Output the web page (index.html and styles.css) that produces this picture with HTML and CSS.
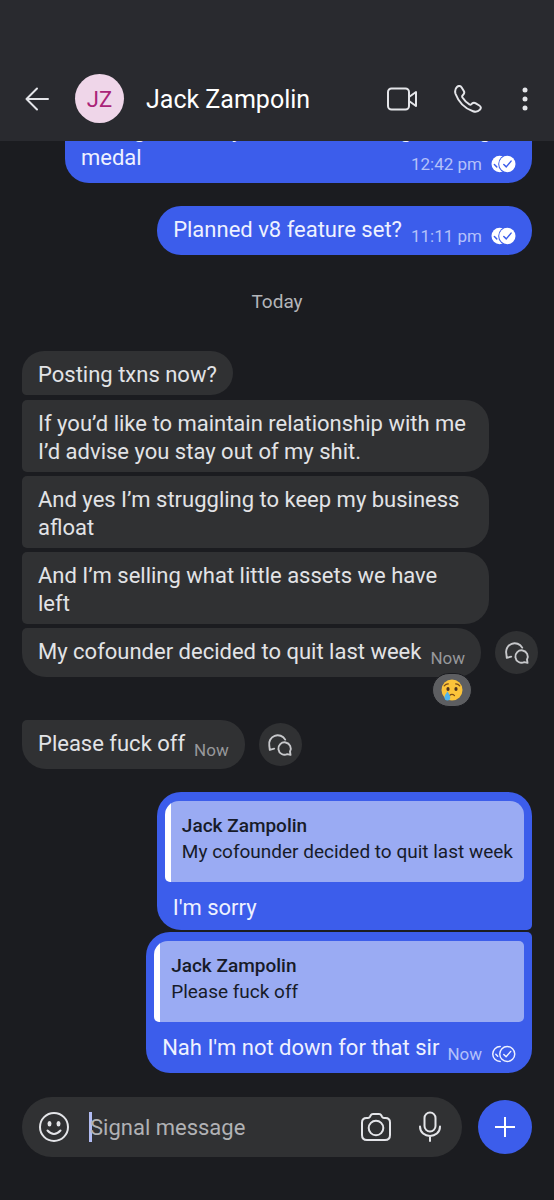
FILE: index.html
```html
<!DOCTYPE html>
<html lang="en">
<head>
<meta charset="utf-8">
<meta name="viewport" content="width=device-width, initial-scale=1">
<title>Jack Zampolin</title>
<link rel="stylesheet" href="styles.css">
</head>
<body>
<svg class="defs" aria-hidden="true">
  <symbol id="read" viewBox="0 0 26 18">
    <circle cx="9" cy="9" r="8.500" fill="#fff"/>
    <path d="M3.500 9.500l2.500 2.500" fill="none" stroke="#3c5deb" stroke-width="1.500" stroke-linecap="round"/>
    <circle cx="17" cy="9" r="9.500" fill="#3c5deb"/>
    <circle cx="17" cy="9" r="8.500" fill="#fff"/>
    <path d="M13.300 9.500l2.600 2.500 5-6" fill="none" stroke="#3c5deb" stroke-width="1.500" stroke-linecap="round" stroke-linejoin="round"/>
  </symbol>
  <symbol id="delivered" viewBox="0 0 26 18">
    <g fill="none" stroke="#eef1ff" stroke-width="1.500" stroke-linecap="round" stroke-linejoin="round">
      <path d="M9.600 1.200A7.800 7.800 0 1 0 9.600 16.800M5 9.200l2 2.200"/>
      <circle cx="16.900" cy="9" r="7.800"/>
      <path d="M13.300 9.500l2.400 2.400 4.800-5.600"/>
    </g>
  </symbol>
  <symbol id="chats" viewBox="0 0 26 24">
    <g fill="none" stroke="currentColor" stroke-width="1.900" stroke-linecap="round" stroke-linejoin="round">
      <path d="M18.200 6.600A8.600 8.600 0 0 0 2.300 12.600L2.800 16.800L7.200 15.600"/>
      <path d="M23 18.500a6.200 6.200 0 1 0-2.700 2.600l3.200.8z"/>
    </g>
  </symbol>
</svg>
<div class="app">
  <header class="topbar">
    <button class="icon-btn back" aria-label="Back">
      <svg width="24" height="24" viewBox="0 0 24 24"><path d="M23 12H1.500M12 1.500L1.500 12L12 22.500"/></svg>
    </button>
    <div class="avatar">JZ</div>
    <h1 class="name">Jack Zampolin</h1>
    <div class="actions">
      <button class="icon-btn" aria-label="Video call">
        <svg width="32" height="24" viewBox="0 0 32 24"><rect x="2" y="1.500" width="21" height="21" rx="3.500"/><path d="M23 10l7-5v14l-7-5"/></svg>
      </button>
      <button class="icon-btn" aria-label="Voice call">
        <svg width="28" height="28" viewBox="0 0 28 28"><path d="M3.200 1.800C4.800.5 6.400.7 7.500 2.300L9.800 6C10.600 7.400 10.300 8.700 9.200 9.800L8.400 10.600C8 11.200 8.100 11.800 8.500 12.500C10.200 15.200 12.600 17.700 15.400 19.400C16.100 19.800 16.700 19.800 17.300 19.300L18 18.600C19.100 17.600 20.500 17.500 21.800 18.300L25.300 20.500C27 21.600 27.300 23.200 26 24.700C24.100 26.800 21.800 27.400 19 26.300C11.200 23.600 4.600 17 1.600 9C.6 6 1.100 3.700 3.200 1.800Z"/></svg>
      </button>
      <button class="icon-btn more" aria-label="More options">
        <svg class="dots" width="6" height="24" viewBox="0 0 6 24"><circle cx="3" cy="3" r="2.500"/><circle cx="3" cy="12" r="2.500"/><circle cx="3" cy="21" r="2.500"/></svg>
      </button>
    </div>
  </header>

  <main class="thread">
    <article class="bubble out wide">
      <p class="text">Taking home my another amazing training medal</p>
      <span class="meta corner">12:42 pm <svg class="status"><use href="#read"/></svg></span>
    </article>
    <article class="bubble out timed gap-l">
      <p class="text">Planned v8 feature set?</p>
      <span class="meta">11:11 pm <svg class="status"><use href="#read"/></svg></span>
    </article>
    <p class="day">Today</p>
    <article class="bubble in first"><p class="text">Posting txns now?</p></article>
    <article class="bubble in mid"><p class="text">If you’d like to maintain relationship with me I’d advise you stay out of my shit.</p></article>
    <article class="bubble in mid"><p class="text">And yes I’m struggling to keep my business afloat</p></article>
    <article class="bubble in mid"><p class="text">And I’m selling what little assets we have left</p></article>
    <div class="row">
      <article class="bubble in last timed">
        <p class="text">My cofounder decided to quit last week</p><span class="meta">Now</span>
        <button class="reaction" aria-label="Crying face reaction">
          <svg width="22" height="22" viewBox="0 0 22 22">
            <circle cx="11" cy="11" r="10.500" fill="#fcc43a"/>
            <path d="M3.200 6.800Q5 4.800 7.300 4.900M14.700 4.900Q17 4.800 18.800 6.800M8.500 16.700Q11 14.200 13.500 16.700" fill="none" stroke="#7a4a16" stroke-width="1.200" stroke-linecap="round"/>
            <ellipse cx="7" cy="10" rx="1.600" ry="2.100" fill="#4f3422"/><ellipse cx="15" cy="10" rx="1.600" ry="2.100" fill="#4f3422"/>
            <path d="M6.500 12.500Q3.300 16.500 3.500 18.500A2.900 2.900 0 0 0 9.300 18.500Q9.300 16.500 6.500 12.500Z" fill="#4fb5ee"/>
          </svg>
        </button>
      </article>
      <button class="thread-btn" aria-label="Open thread"><svg width="26" height="24"><use href="#chats"/></svg></button>
    </div>
    <div class="row after-reaction">
      <article class="bubble in last timed">
        <p class="text">Please fuck off</p><span class="meta">Now</span>
      </article>
      <button class="thread-btn" aria-label="Open thread"><svg width="26" height="24"><use href="#chats"/></svg></button>
    </div>
    <article class="bubble out quoted q-first gap-l">
      <blockquote class="quote"><strong class="author">Jack Zampolin</strong><p class="excerpt">My cofounder decided to quit last week</p></blockquote>
      <div class="line"><p class="text">I'm sorry</p></div>
    </article>
    <article class="bubble out quoted q-last">
      <blockquote class="quote"><strong class="author">Jack Zampolin</strong><p class="excerpt">Please fuck off</p></blockquote>
      <div class="line"><p class="text">Nah I'm not down for that sir</p><span class="meta">Now <svg class="status"><use href="#delivered"/></svg></span></div>
    </article>
  </main>

  <form class="composer">
    <div class="field">
      <button type="button" class="icon-btn" aria-label="Emoji">
        <svg width="32" height="32" viewBox="0 0 32 32"><circle cx="16" cy="16" r="14"/><path d="M9.500 19.500Q16 26.500 22.500 19.500"/><g class="solid"><ellipse cx="11.500" cy="12.800" rx="2" ry="2.700"/><ellipse cx="20.500" cy="12.800" rx="2" ry="2.700"/></g></svg>
      </button>
      <span class="caret"></span>
      <input class="input" type="text" placeholder="Signal message" aria-label="Signal message">
      <button type="button" class="icon-btn" aria-label="Camera">
        <svg width="32" height="30" viewBox="0 0 32 30"><path d="M2 10.500Q2 6 6.500 6H8Q9.300 6 10 4.700L10.600 3.500Q11.400 2 13 2H19Q20.600 2 21.400 3.500L22 4.700Q22.700 6 24 6H25.500Q30 6 30 10.500V23Q30 28 25 28H7Q2 28 2 23Z"/><circle cx="16" cy="16" r="7.300"/></svg>
      </button>
      <button type="button" class="icon-btn mic" aria-label="Voice message">
        <svg width="24" height="32" viewBox="0 0 24 32"><rect x="6.500" y="1.500" width="11" height="19" rx="5.500"/><path d="M2 15.500C2 28 22 28 22 15.500M12 25V30"/></svg>
      </button>
    </div>
    <button type="button" class="add" aria-label="Attach"><svg width="22" height="22" viewBox="0 0 22 22"><path d="M11 1V21M1 11H21"/></svg></button>
  </form>
</div>
</body>
</html>
```
FILE: styles.css
```css
* { box-sizing: border-box; }
body { margin: 0; background: #1b1c20; color: #e2e3e6; font-family: Roboto, "Noto Sans", sans-serif; font-size: 22px; line-height: 28px; }
p, h1, blockquote { margin: 0; }
button { padding: 0; border: 0; background: none; color: inherit; font: inherit; display: flex; align-items: center; justify-content: center; }
.defs { display: none; }
.app { height: 100vh; display: flex; flex-direction: column; }

.topbar { display: flex; align-items: center; padding: 74px 26px 18px 25px; background: #292a2f; }
.avatar { width: 49px; height: 49px; margin-left: 26px; padding-top: 2px; border-radius: 50%; background: #efd6e9; color: #aa2378; display: flex; align-items: center; justify-content: center; }
.name { flex: 1; margin-left: 22px; padding-top: 3px; font-size: 25px; font-weight: 400; color: #fff; }
.actions { display: flex; align-items: center; gap: 36px; }
.more { padding-left: 4px; }
.icon-btn svg { fill: none; stroke: #e4e5e9; stroke-width: 2; stroke-linecap: round; stroke-linejoin: round; }
.icon-btn .dots, .icon-btn .solid { fill: #e4e5e9; stroke: none; }

/* Newest messages stay at the bottom; older ones scroll out under the top bar. */
.thread { flex: 1; display: flex; flex-direction: column; align-items: flex-start; justify-content: flex-end; gap: 4px; padding: 0 22px; min-height: 0; overflow: hidden; }
.thread > * { flex-shrink: 0; }
.bubble { position: relative; max-width: 467px; padding: 10px 16px 6px; border-radius: 24px; }
.timed { display: flex; align-items: flex-end; gap: 9px; padding-bottom: 11px; }
.in { background: #303133; }
.out { background: #3c5deb; color: #eef1ff; align-self: flex-end; }
.wide { padding-bottom: 11px; }
.first { margin-bottom: 1px; border-bottom-left-radius: 5px; }
.mid { border-top-left-radius: 5px; border-bottom-left-radius: 5px; }
.last { border-top-left-radius: 5px; }
.gap-l { margin-top: 19px; }
.meta { display: flex; align-items: center; gap: 9px; font-size: 17px; line-height: 20px; margin-bottom: -2px; white-space: nowrap; color: #97989b; }
.out .meta { color: #b4c1fa; }
.corner { position: absolute; right: 16px; bottom: 11px; }
.status { width: 25px; height: 18px; }
.day { align-self: center; margin: 33px 0 35px; font-size: 19px; line-height: 20px; color: #b4b5b9; }

.row { display: flex; align-items: center; gap: 14px; margin-right: -12px; }
.after-reaction { margin-top: 39px; }
.thread-btn { width: 43px; height: 43px; flex-shrink: 0; border-radius: 50%; background: #303133; color: #c7c8cb; }
.reaction { position: absolute; right: 9px; bottom: -30px; width: 40px; height: 34px; border: 1px solid #1b1c20; border-radius: 17px; background: #5d5e61; }

.quoted { padding: 9px 8px 8px; }
.q-first { border-bottom-right-radius: 5px; }
.q-last { border-top-right-radius: 5px; margin-top: -2px; }
.quote { min-height: 81px; padding: 12px 11px 16px 17px; border-radius: 14px 14px 5px 5px; background: linear-gradient(to right, #fff 6px, #9aabf3 6px); color: #171b29; font-size: 19px; line-height: 26px; }
.q-last .quote { border-top-right-radius: 5px; }
.author { display: block; font-weight: 500; }
.line { display: flex; align-items: flex-end; justify-content: space-between; gap: 8px; padding: 12px 8px 0; }
.q-last .line { padding-bottom: 3px; }

.composer { display: flex; align-items: center; gap: 16px; padding: 24px 22px 43px; }
.field { flex: 1; min-width: 0; height: 60px; display: flex; align-items: center; padding: 0 20px 0 16px; border-radius: 30px; background: #303133; }
.caret { width: 3px; height: 30px; margin: 0 -2px 0 19px; background: #b2bcf3; }
.input { flex: 1; min-width: 0; padding: 2px 0 0; border: 0; outline: 0; background: none; color: inherit; font: inherit; }
.input::placeholder { color: #b1b2b5; opacity: 1; }
.mic { margin-left: 26px; }
.add { width: 54px; height: 54px; border-radius: 50%; background: #3c5deb; }
.add svg { fill: none; stroke: #fff; stroke-width: 2; }
```
